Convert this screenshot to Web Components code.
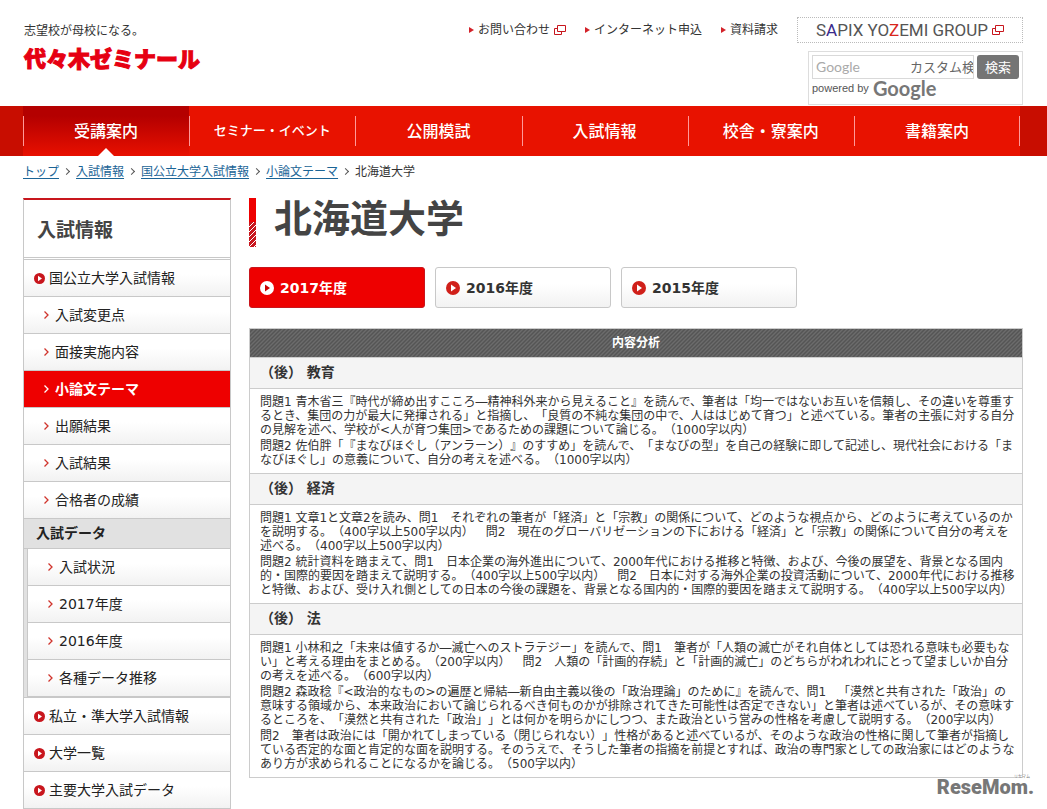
<!DOCTYPE html>
<html lang="ja">
<head>
<meta charset="utf-8">
<title>北海道大学 | 小論文テーマ</title>
<style>
  body {
    margin: 0;
    background: #fff;
    color: #333;
    font: 12px/14px "DejaVu Sans", "Noto Sans CJK JP", sans-serif;
    text-spacing-trim: space-all;
  }
  .columns {
    display: flex;
    align-items: flex-start;
    gap: 18px;
    padding: 0 24px 0 23px;
  }
  main { flex: 1; min-width: 0; }
  .tabs { display: flex; gap: 10px; margin: 20px 0; }
</style>
</head>
<body>
  <yz-header></yz-header>
  <yz-nav>
    <yz-nav-item current>受講案内</yz-nav-item>
    <yz-nav-item>セミナー・イベント</yz-nav-item>
    <yz-nav-item>公開模試</yz-nav-item>
    <yz-nav-item>入試情報</yz-nav-item>
    <yz-nav-item>校舎・寮案内</yz-nav-item>
    <yz-nav-item>書籍案内</yz-nav-item>
  </yz-nav>
  <yz-breadcrumb></yz-breadcrumb>

  <div class="columns">
    <yz-side-menu heading="入試情報">
      <yz-side-item kind="top">国公立大学入試情報</yz-side-item>
      <yz-side-item>入試変更点</yz-side-item>
      <yz-side-item>面接実施内容</yz-side-item>
      <yz-side-item current>小論文テーマ</yz-side-item>
      <yz-side-item>出願結果</yz-side-item>
      <yz-side-item>入試結果</yz-side-item>
      <yz-side-item>合格者の成績</yz-side-item>
      <yz-side-group heading="入試データ">
        <yz-side-item>入試状況</yz-side-item>
        <yz-side-item>2017年度</yz-side-item>
        <yz-side-item>2016年度</yz-side-item>
        <yz-side-item>各種データ推移</yz-side-item>
      </yz-side-group>
      <yz-side-item kind="top">私立・準大学入試情報</yz-side-item>
      <yz-side-item kind="top">大学一覧</yz-side-item>
      <yz-side-item kind="top">主要大学入試データ</yz-side-item>
    </yz-side-menu>

    <main>
      <yz-title>北海道大学</yz-title>
      <div class="tabs">
        <yz-year-tab current>2017年度</yz-year-tab>
        <yz-year-tab>2016年度</yz-year-tab>
        <yz-year-tab>2015年度</yz-year-tab>
      </div>
      <yz-analysis></yz-analysis>
    </main>
  </div>
  <yz-watermark></yz-watermark>

<script>
(function() {
  // small helper: registers an element whose shadow root is cloned from a template
  function define(name, html, setup) {
    const template = document.createElement('template');
    template.innerHTML = html;

    window.customElements.define(name, class extends HTMLElement {
      constructor() {
        super();
        this.attachShadow({ mode: 'open' });
        this.shadowRoot.appendChild(template.content.cloneNode(true));
      }

      connectedCallback() {
        if (setup) setup(this, this.shadowRoot);
      }
    });
  }

  const windowIcon = `
    <svg width="12" height="10" viewBox="0 0 12 10" fill="none" stroke="#c8161d" aria-hidden="true">
      <path d="M3.5 .5h8v6h-8z"/><path d="M3 3.5H.5v6h7V7"/>
    </svg>`;

  // header --------------------------------------------------
  define('yz-header', `
    <style>
      :host { display: block; height: 106px; }
      header { display: flex; justify-content: space-between; padding: 17px 24px 0 23px; }
      a { color: inherit; text-decoration: none; }
      .brand { padding: 7px 0 0 1px; }
      .brand p { margin: 0; }
      .logo {
        display: block;
        margin-top: 1px;
        color: #e60012;
        font-size: 22px;
        line-height: 42px;
        font-weight: 900;
        -webkit-text-stroke: 1px #e60012;
      }
      .right { display: flex; flex-direction: column; align-items: flex-end; gap: 8px; }
      .links { display: flex; align-items: center; gap: 19px; }
      .link { display: flex; align-items: center; gap: 4px; }
      .link::before {
        content: "";
        border: solid transparent;
        border-width: 3px 0 3px 5px;
        border-left-color: #d3222a;
      }
      .group {
        display: flex;
        align-items: center;
        justify-content: center;
        gap: 4px;
        box-sizing: border-box;
        width: 226px;
        height: 26px;
        border: 1px dotted #bbb;
        color: #555;
        font: 17px/24px Roboto, sans-serif;
      }
      .group i { font-style: normal; color: #3a2a8c; }
      .group b { font-weight: normal; color: #d8261c; }
      form {
        box-sizing: border-box;
        width: 215px;
        height: 54px;
        margin: 0;
        padding: 3px;
        border: 1px solid #ddd;
      }
      .row { display: flex; gap: 3px; }
      .box {
        flex: 1;
        display: flex;
        align-items: center;
        min-width: 0;
        height: 22px;
        border: 1px solid #d9d9d9;
      }
      .box span { width: 94px; padding-left: 3px; color: #aaa; font: 14px/22px Lato, sans-serif; }
      input {
        flex: 1;
        min-width: 0;
        padding: 0;
        border: 0;
        outline: 0;
        background: none;
        font: 13px/20px "Noto Sans CJK JP", sans-serif;
      }
      input::placeholder { color: #666; }
      button {
        width: 42px;
        padding: 0;
        border: 0;
        border-radius: 3px;
        background: #757575;
        color: #fff;
        font: 13px/24px "Noto Sans CJK JP", sans-serif;
      }
      .powered {
        display: flex;
        align-items: center;
        gap: 4px;
        height: 18px;
        font: 11px/18px "Liberation Sans", sans-serif;
        color: #555;
      }
      .powered b { color: #777; font: 700 20px/18px Lato, sans-serif; }
    </style>
    <header>
      <div class="brand">
        <p>志望校が母校になる。</p>
        <a class="logo" href="#">代々木ゼミナール</a>
      </div>
      <div class="right">
        <div class="links">
          <a class="link" href="#">お問い合わせ${windowIcon}</a>
          <a class="link" href="#">インターネット申込</a>
          <a class="link" href="#">資料請求</a>
          <a class="group" href="#"><span>S<i>A</i>PIX YO<b>Z</b>EMI GROUP</span>${windowIcon}</a>
        </div>
        <form>
          <div class="row">
            <label class="box"><span>Google</span><input type="text" placeholder="カスタム検索"></label>
            <button type="button">検索</button>
          </div>
          <div class="powered">powered by <b>Google</b></div>
        </form>
      </div>
    </header>
  `);

  // global nav ----------------------------------------------
  define('yz-nav', `
    <style>
      :host { display: block; background: #c80d00; padding: 0 27px 0 23px; }
      nav { display: flex; height: 50px; background: linear-gradient(#f99, #f99) right 10px / 1px 30px no-repeat #e81200; }
    </style>
    <nav><slot></slot></nav>
  `);

  define('yz-nav-item', `
    <style>
      :host {
        flex: 1;
        display: block;
        position: relative;
        background: linear-gradient(#f99, #f99) left 10px / 1px 30px no-repeat;
      }
      :host([current]) {
        background: linear-gradient(#f99, #f99) left 10px / 1px 30px no-repeat,
          linear-gradient(#b40000 20%, #e81000);
      }
      :host([current])::after {
        content: "";
        position: absolute;
        left: 50%;
        bottom: 0;
        margin-left: -8px;
        border: solid transparent;
        border-width: 0 8px 8px;
        border-bottom-color: #fff;
      }
      a {
        display: block;
        text-align: center;
        color: #fff;
        text-decoration: none;
        font: 500 16px/48px "Noto Sans CJK JP", sans-serif;
      }
      a.long { font-size: 13px; }
    </style>
    <a href="#"><slot></slot></a>
  `, (host, root) => {
    if (host.textContent.length > 6) root.querySelector('a').classList.add('long');
  });

  // breadcrumb ----------------------------------------------
  define('yz-breadcrumb', `
    <style>
      :host { display: block; padding: 8px 23px 18px; }
      ol { display: flex; margin: 0; padding: 0; list-style: none; line-height: 16px; }
      li + li::before {
        content: "";
        display: inline-block;
        width: 4px;
        height: 4px;
        margin: 0 7px 2px 5px;
        border: solid #555;
        border-width: 1px 1px 0 0;
        transform: rotate(45deg);
      }
      a { color: #1a6496; text-underline-offset: 2px; }
    </style>
    <nav>
      <ol>
        <li><a href="#">トップ</a></li>
        <li><a href="#">入試情報</a></li>
        <li><a href="#">国公立大学入試情報</a></li>
        <li><a href="#">小論文テーマ</a></li>
        <li>北海道大学</li>
      </ol>
    </nav>
  `);

  // side menu -----------------------------------------------
  define('yz-side-menu', `
    <style>
      :host {
        display: block;
        flex: 0 0 206px;
        border: 1px solid #c8c8c8;
        border-top: 2px solid #c8161d;
        border-bottom: 0;
      }
      h2 {
        margin: 0 0 1px;
        padding-left: 13px;
        border-bottom: 1px solid #c8c8c8;
        color: #444;
        font: 700 19px/57px "Noto Sans CJK JP", sans-serif;
      }
      nav { border-top: 1px solid #c8c8c8; }
    </style>
    <h2></h2>
    <nav><slot></slot></nav>
  `, (host, root) => {
    root.querySelector('h2').textContent = host.getAttribute('heading');
  });

  define('yz-side-item', `
    <style>
      :host {
        display: block;
        border-bottom: 1px solid #c8c8c8;
        background: linear-gradient(#fff 40%, #f2f2f2);
      }
      :host([current]) { background: #e00; font-weight: bold; }
      a {
        display: flex;
        align-items: center;
        gap: 6px;
        height: 36px;
        padding-left: 20px;
        color: #222;
        font-size: 14px;
        line-height: 36px;
        text-decoration: none;
      }
      :host([current]) a { color: #fff; }
      :host([kind="top"]) a { gap: 4px; padding-left: 10px; }
      svg { fill: none; stroke: #d0342c; stroke-width: 1.3; }
      :host([current]) svg { stroke: #fff; }
      .dot { display: none; fill: #c8161d; stroke: none; }
      :host([kind="top"]) .dot { display: block; }
      :host([kind="top"]) .arrow { display: none; }
    </style>
    <a href="#">
      <svg class="arrow" width="5" height="8" viewBox="0 0 5 8"><path d="M.5 .5 4 4 .5 7.5"/></svg>
      <svg class="dot" width="11" height="11" viewBox="0 0 11 11"><circle cx="5.5" cy="5.5" r="5.5"/><path fill="#fff" d="M4 2.7v5.6l4-2.8z"/></svg>
      <slot></slot>
    </a>
  `);

  define('yz-side-group', `
    <style>
      :host { display: block; background: #e1e1e1; border-bottom: 1px solid #c8c8c8; }
      h3 {
        margin: 0;
        padding-left: 12px;
        border-bottom: 1px solid #c8c8c8;
        color: #222;
        font-size: 14px;
        line-height: 29px;
      }
      div { margin-left: 3px; border-left: 1px solid #c8c8c8; }
    </style>
    <h3></h3>
    <div><slot></slot></div>
  `, (host, root) => {
    root.querySelector('h3').textContent = host.getAttribute('heading');
  });

  // page title ----------------------------------------------
  define('yz-title', `
    <style>
      :host { display: flex; gap: 18px; }
      :host::before {
        content: "";
        width: 7px;
        height: 49px;
        background:
          linear-gradient(#e00, #e00) top / 100% 24px no-repeat,
          linear-gradient(135deg, #c8161d 38%, #fff 38% 50%, #c8161d 50% 88%, #fff 88%) 0 0 / 5px 5px;
      }
      h1 { margin: 0; color: #444; font-size: 38px; line-height: 42px; }
    </style>
    <h1><slot></slot></h1>
  `);

  define('yz-year-tab', `
    <style>
      :host { display: block; flex: 0 1 176px; }
      a {
        display: flex;
        align-items: center;
        gap: 6px;
        height: 39px;
        padding-left: 10px;
        border: 1px solid #c8c8c8;
        border-radius: 3px;
        background: linear-gradient(#fff 40%, #f2f2f2);
        color: #333;
        font-size: 14px;
        font-weight: bold;
        text-decoration: none;
      }
      circle { fill: #d0201a; }
      path { fill: #fff; }
      :host([current]) a { background: #e00; border-color: #c8161d; color: #fff; }
      :host([current]) circle { fill: #fff; }
      :host([current]) path { fill: #c00; }
    </style>
    <a href="#">
      <svg width="14" height="14" viewBox="0 0 14 14"><circle cx="7" cy="7" r="7"/><path d="M5 3.5v7L10 7z"/></svg>
      <slot></slot>
    </a>
  `);

  // analysis table ------------------------------------------
  const sections = [
    ['（後） 教育', [
      `問題1 青木省三『時代が締め出すこころ―精神科外来から見えること』を読んで、筆者は「均一ではないお互いを信頼し、その違いを尊重す
るとき、集団の力が最大に発揮される」と指摘し、「良質の不純な集団の中で、人ははじめて育つ」と述べている。筆者の主張に対する自分
の見解を述べ、学校が<人が育つ集団>であるための課題について論じる。（1000字以内）`,
      `問題2 佐伯胖「『まなびほぐし（アンラーン）』のすすめ」を読んで、「まなびの型」を自己の経験に即して記述し、現代社会における「ま
なびほぐし」の意義について、自分の考えを述べる。（1000字以内）`
    ]],
    ['（後） 経済', [
      `問題1 文章1と文章2を読み、問1　それぞれの筆者が「経済」と「宗教」の関係について、どのような視点から、どのように考えているのか
を説明する。（400字以上500字以内）　問2　現在のグローバリゼーションの下における「経済」と「宗教」の関係について自分の考えを
述べる。（400字以上500字以内）`,
      `問題2 統計資料を踏まえて、問1　日本企業の海外進出について、2000年代における推移と特徴、および、今後の展望を、背景となる国内
的・国際的要因を踏まえて説明する。（400字以上500字以内）　問2　日本に対する海外企業の投資活動について、2000年代における推移
と特徴、および、受け入れ側としての日本の今後の課題を、背景となる国内的・国際的要因を踏まえて説明する。（400字以上500字以内）`
    ]],
    ['（後） 法', [
      `問題1 小林和之「未来は値するか―滅亡へのストラテジー」を読んで、問1　筆者が「人類の滅亡がそれ自体としては恐れる意味も必要もな
い」と考える理由をまとめる。（200字以内）　問2　人類の「計画的存続」と「計画的滅亡」のどちらがわれわれにとって望ましいか自分
の考えを述べる。（600字以内）`,
      `問題2 森政稔『<政治的なもの>の遍歴と帰結―新自由主義以後の「政治理論」のために』を読んで、問1　「漠然と共有された「政治」の
意味する領域から、本来政治において論じられるべき何ものかが排除されてきた可能性は否定できない」と筆者は述べているが、その意味す
るところを、「漠然と共有された「政治」」とは何かを明らかにしつつ、また政治という営みの性格を考慮して説明する。（200字以内）`,
      `問2　筆者は政治には「開かれてしまっている（閉じられない）」性格があると述べているが、そのような政治の性格に関して筆者が指摘し
ている否定的な面と肯定的な面を説明する。そのうえで、そうした筆者の指摘を前提とすれば、政治の専門家としての政治家にはどのような
あり方が求められることになるかを論じる。（500字以内）`
    ]]
  ];

  define('yz-analysis', `
    <style>
      :host { display: block; }
      table { width: 100%; border-collapse: collapse; }
      th, td { border: 1px solid #ccc; padding: 6px 0 6px 10px; text-align: left; }
      thead th {
        padding: 0;
        background: linear-gradient(135deg, #555 38%, #828282 38% 50%, #555 50% 88%, #828282 88%) 0 0 / 4px 4px;
        color: #fff;
        text-align: center;
        line-height: 28px;
      }
      tbody th { padding-top: 0; padding-bottom: 2px; background: #f4f4f4; font-size: 14px; line-height: 28px; }
      p { margin: 0; white-space: pre-line; }
      p + p { margin-top: 2px; }
    </style>
    <table>
      <thead><tr><th scope="col">内容分析</th></tr></thead>
      <tbody></tbody>
    </table>
  `, (host, root) => {
    const body = root.querySelector('tbody');
    sections.forEach(([name, paragraphs]) => {
      const th = document.createElement('th');
      th.scope = 'rowgroup';
      th.textContent = name;
      body.insertRow().appendChild(th);

      const td = body.insertRow().insertCell();
      paragraphs.forEach(text => {
        const p = document.createElement('p');
        p.textContent = text;
        td.appendChild(p);
      });
    });
  });

  // watermark, lies over the page corner --------------------
  define('yz-watermark', `
    <style>
      :host {
        position: absolute;
        right: 13px;
        top: 774px;
        color: #777;
        font: 900 20px/26px Roboto, sans-serif;
      }
      small {
        position: absolute;
        right: 4px;
        top: 0;
        font: 4px/5px "Noto Sans CJK JP", sans-serif;
      }
    </style>
    ReseMom.<small>リセマム</small>
  `);
})();
</script>
</body>
</html>
